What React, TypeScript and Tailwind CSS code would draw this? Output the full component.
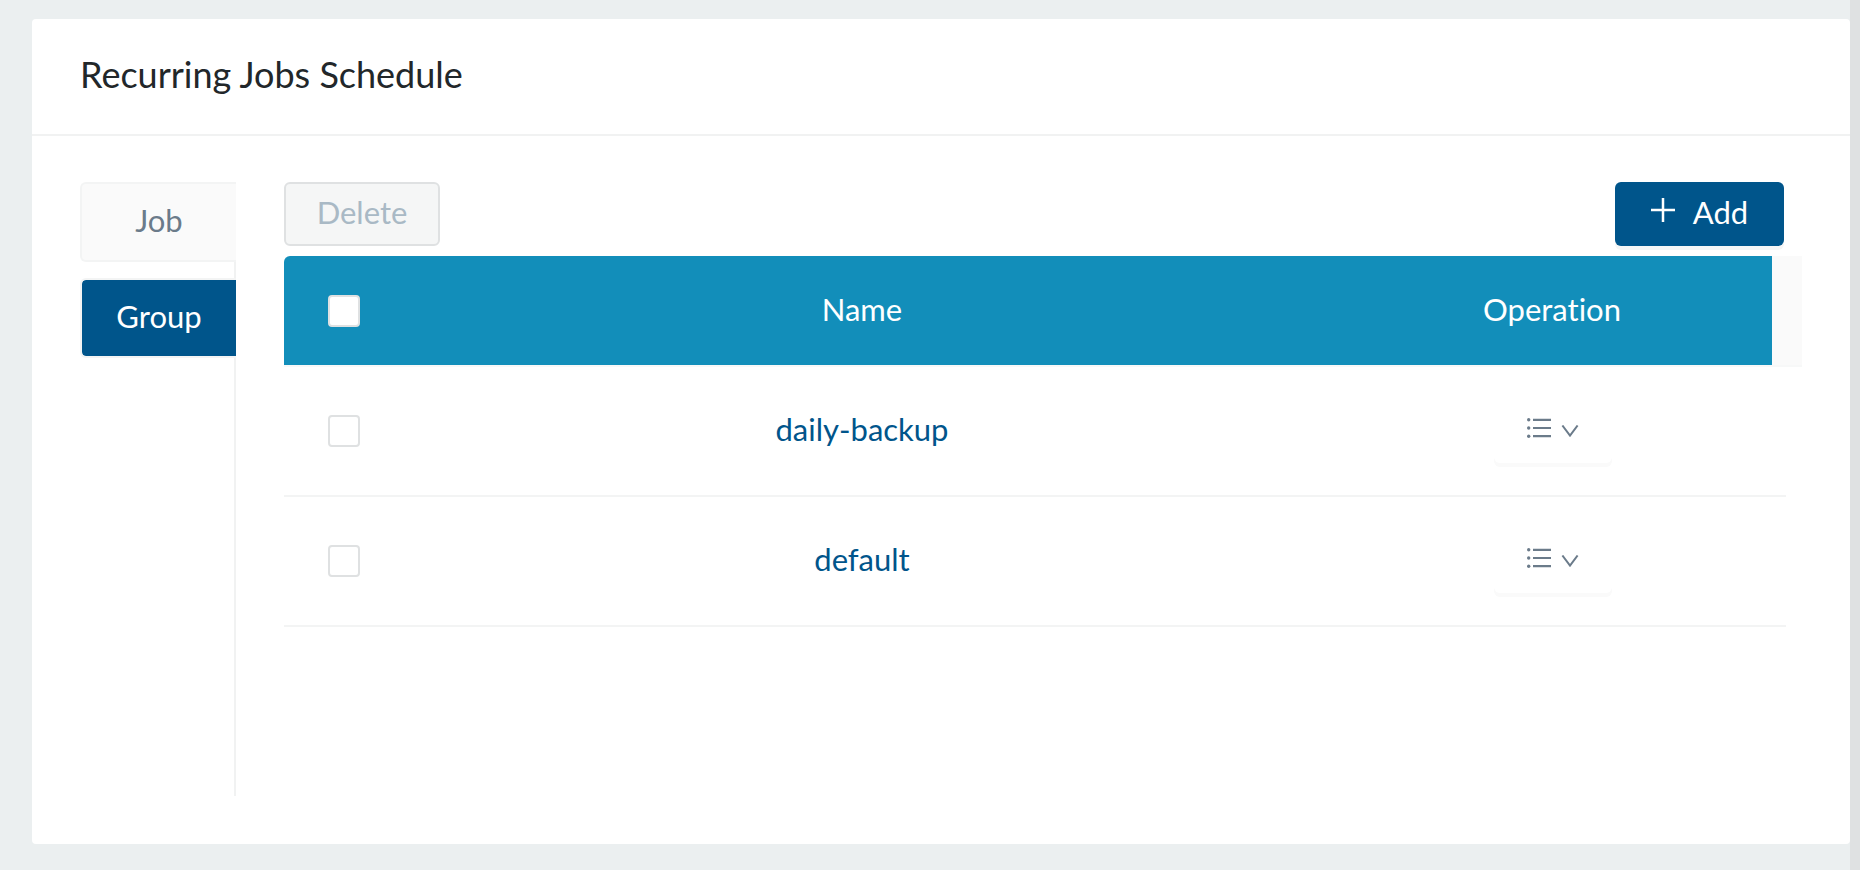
import { useState } from 'react';
import { clsx } from 'clsx';

type Group = {
  id: string;
  name: string;
};

type CheckboxProps = {
  label: string;
  checked: boolean;
  onChange: (checked: boolean) => void;
};

const tabs = ['Job', 'Group'];

const groups: Group[] = [
  { id: 'daily-backup', name: 'daily-backup' },
  { id: 'default', name: 'default' },
];

const PlusIcon = () => (
  <svg width="24" height="24" viewBox="0 0 24 24" stroke="currentColor" strokeWidth="2.5" aria-hidden="true">
    <path d="M12 0v24M0 12h24" />
  </svg>
);

const ListIcon = () => (
  <svg width="24" height="20" viewBox="0 0 24 20" fill="currentColor" aria-hidden="true">
    <path d="M6 .7h18v2.2H6zM6 8.9h18v2.2H6zM6 17.1h18v2.2H6z" />
    <circle cx="1.7" cy="1.8" r="1.7" />
    <circle cx="1.7" cy="10" r="1.7" />
    <circle cx="1.7" cy="18.2" r="1.7" />
  </svg>
);

const DownIcon = () => (
  <svg width="18" height="12" viewBox="0 0 18 12" fill="none" stroke="currentColor" strokeWidth="2" aria-hidden="true">
    <path d="M1.4.5 9 10.6 16.6.5" />
  </svg>
);

const Checkbox = ({ label, checked, onChange }: CheckboxProps) => (
  <input
    type="checkbox"
    aria-label={label}
    checked={checked}
    onChange={(e) => onChange(e.target.checked)}
    className="mx-auto block size-8 appearance-none rounded border-2 border-[#dfe1e2] bg-white checked:border-[#00558b] checked:bg-[#00558b]"
  />
);

const App = () => {
  const [activeTab, setActiveTab] = useState('Group');
  const [selected, setSelected] = useState<string[]>([]);

  const toggle = (id: string, checked: boolean) =>
    setSelected((prev) => (checked ? [...prev, id] : prev.filter((s) => s !== id)));

  return (
    <div className="flex min-h-screen bg-[#ebeff0] font-['Lato','Open_Sans',sans-serif] text-[31px] leading-9 text-[#6b7b8a] [font-variant-ligatures:none]">
      <main className="flex min-w-0 flex-1 flex-col pt-[19px] pb-[26px] pl-8">
        <section className="flex flex-1 flex-col rounded bg-white">
          <h1 className="border-b-2 border-[#f1f2f2] px-12 pt-[34px] pb-[38px] text-[36px] leading-[43px] text-[#22272a]">
            Recurring Jobs Schedule
          </h1>
          <div className="flex flex-1 gap-12 px-12 pt-[46px] pb-12">
            <nav className="flex w-[156px] shrink-0 flex-col gap-4 border-r-2 border-[#f1f2f2]">
              {tabs.map((tab) => (
                <button
                  key={tab}
                  type="button"
                  onClick={() => setActiveTab(tab)}
                  className={clsx(
                    '-mr-0.5 h-20 rounded-l-md border-2 border-r-0 border-[#f3f4f4] pb-1',
                    tab === activeTab ? 'bg-[#00558b] bg-clip-padding text-white' : 'bg-[#fafafa]',
                  )}
                >
                  {tab}
                </button>
              ))}
            </nav>

            <div className="min-w-0 flex-1">
              <div className="mb-2.5 flex justify-between pr-[18px]">
                <button
                  type="button"
                  disabled={selected.length === 0}
                  className="flex h-16 w-[156px] justify-center rounded-md border-2 border-[#dfe1e2] bg-[#f5f6f6] pt-2.5 text-[#a9b9c5]"
                >
                  Delete
                </button>
                <button
                  type="button"
                  className="flex h-16 w-[169px] justify-center gap-[18px] rounded-md bg-[#00558b] pt-3 text-white shadow-[0_4px_0_#f5f6f6]"
                >
                  <span className="pt-1">
                    <PlusIcon />
                  </span>
                  Add
                </button>
              </div>

              <table className="w-full table-fixed border-separate border-spacing-0 text-center">
                <colgroup>
                  <col className="w-[120px]" />
                  <col />
                  <col className="w-[452px]" />
                  <col className="w-3.5" />
                  <col className="w-4" />
                </colgroup>
                <thead>
                  <tr className="h-[111px] text-white *:border-b-2 *:border-[#f7f8f8] *:bg-[#128eba] *:bg-clip-padding *:p-0 *:font-normal">
                    <th className="rounded-tl-md">
                      <Checkbox
                        label="Select all groups"
                        checked={selected.length === groups.length}
                        onChange={(checked) => setSelected(checked ? groups.map((g) => g.id) : [])}
                      />
                    </th>
                    <th>
                      <div className="pb-1">Name</div>
                    </th>
                    <th>
                      <div className="pb-1 pl-3">Operation</div>
                    </th>
                    <td colSpan={2} className="bg-[#fafafa]!" />
                  </tr>
                </thead>
                <tbody>
                  {groups.map((group) => (
                    <tr
                      key={group.id}
                      className="h-[130px] *:border-b-2 *:border-[#f3f4f4] *:p-0 *:last:border-b-0"
                    >
                      <td>
                        <Checkbox
                          label={`Select ${group.name}`}
                          checked={selected.includes(group.id)}
                          onChange={(checked) => toggle(group.id, checked)}
                        />
                      </td>
                      <td>
                        <div className="pb-1">
                          <a href={`#${group.id}`} className="text-[#00558b]">
                            {group.name}
                          </a>
                        </div>
                      </td>
                      <td>
                        <div className="flex justify-center pl-3.5">
                          <button
                            type="button"
                            aria-label={`Operations for ${group.name}`}
                            className="flex h-16 w-[118px] items-center justify-center gap-2.5 rounded-md bg-white pb-1.5 shadow-[0_4px_0_#fafafa]"
                          >
                            <ListIcon />
                            <span className="pt-1.5">
                              <DownIcon />
                            </span>
                          </button>
                        </div>
                      </td>
                      <td />
                      <td />
                    </tr>
                  ))}
                </tbody>
              </table>
            </div>
          </div>
        </section>
      </main>
      {/* page scrollbar track */}
      <div className="w-2.5 shrink-0 bg-[#dfe1e2]" />
    </div>
  );
};

export default App;
